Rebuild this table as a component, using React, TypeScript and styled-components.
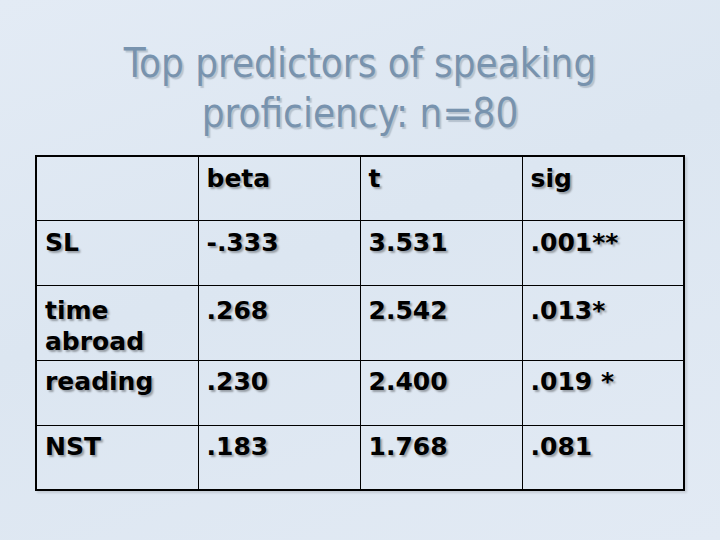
import React from 'react';
import styled, { createGlobalStyle } from 'styled-components';

const GlobalStyle = createGlobalStyle`
  html, body {
    margin: 0;
    padding: 0;
  }
  body {
    width: 720px;
    height: 540px;
    overflow: hidden;
  }
`;

const Slide = styled.div`
  width: 720px;
  height: 540px;
  box-sizing: border-box;
  padding: 38px 0 0 35px;
  background: linear-gradient(160deg, #e3ebf5 0%, #dce6f1 45%, #e2eaf4 100%);
  display: flex;
  flex-direction: column;
`;

const Title = styled.h1`
  margin: 0 35px 0 0;
  font-family: "DejaVu Sans Condensed", "DejaVu Sans", sans-serif;
  font-weight: normal;
  font-size: 40px;
  line-height: 50px;
  color: #7893ae;
  text-align: center;
  text-shadow: 2px 2px 1px rgba(110, 125, 140, 0.35);
  height: 117px;
`;

const Table = styled.table`
  width: 650px;
  border-collapse: collapse;
  table-layout: fixed;
  border: 2px solid #000;
  box-shadow: 2px 2px 2px rgba(0, 0, 0, 0.12);
`;

const Row = styled.tr<{ $h: number }>`
  height: ${p => p.$h}px;
`;

const Cell = styled.td<{ $top: number; $lh: number }>`
  border: 1px solid #000;
  vertical-align: top;
  padding: ${p => p.$top}px 6px 0 8px;
  font-family: "DejaVu Sans", Verdana, sans-serif;
  font-weight: bold;
  font-size: 25px;
  line-height: ${p => p.$lh}px;
  color: #000;
  text-shadow: 2px 2px 2px rgba(0, 0, 0, 0.32);
  white-space: pre-line;
`;

const rows: { h: number; top: number; lh: number; cells: string[] }[] = [
  { h: 64, top: 8, lh: 28, cells: ['', 'beta', 't', 'sig'] },
  { h: 65, top: 8, lh: 28, cells: ['SL', '-.333', '3.531', '.001**'] },
  { h: 75, top: 9, lh: 31, cells: ['time\nabroad', '.268', '2.542', '.013*'] },
  { h: 65, top: 7, lh: 28, cells: ['reading', '.230', '2.400', '.019 *'] },
  { h: 65, top: 7, lh: 28, cells: ['NST', '.183', '1.768', '.081'] },
];

export default function App() {
  return (
    <>
      <GlobalStyle />
      <Slide>
        <Title>
          Top predictors of speaking
          <br />
          proficiency: n=80
        </Title>
        <Table>
          <tbody>
            {rows.map((r, i) => (
              <Row key={i} $h={r.h}>
                {r.cells.map((c, j) => (
                  <Cell key={j} $top={r.top} $lh={r.lh}>{c}</Cell>
                ))}
              </Row>
            ))}
          </tbody>
        </Table>
      </Slide>
    </>
  );
}
